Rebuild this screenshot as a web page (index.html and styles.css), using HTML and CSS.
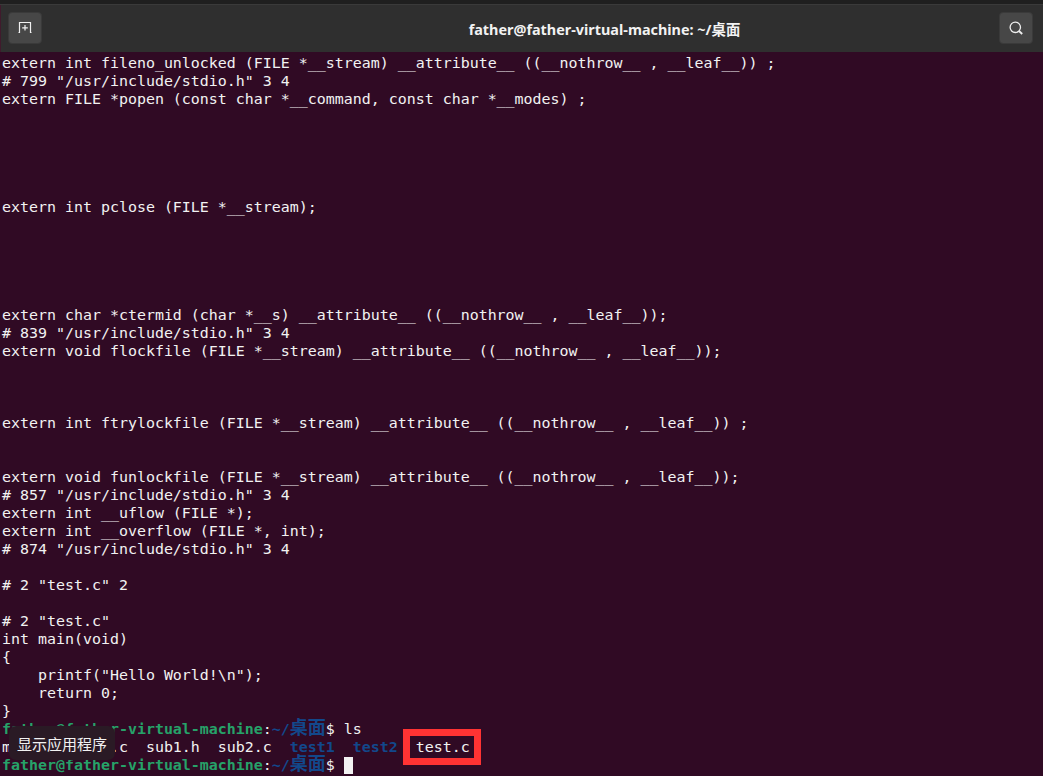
FILE: index.html
```html
<!DOCTYPE html>
<html lang="zh">
<head>
<meta charset="utf-8">
<title>father@father-virtual-machine: ~/桌面</title>
<link rel="stylesheet" href="styles.css">
</head>
<body>
<div class="window">
  <div class="strip"></div>
  <header class="titlebar">
    <button class="tool-btn" aria-label="新建标签页">
      <svg class="icon" viewBox="0 0 16 16" width="16" height="16"><path d="M1.5 12.5h1V2.5h11v10h1M8 5v5.5M5.2 7.8h5.6" fill="none" stroke="#f0f0f0" stroke-width="1.2"/></svg>
    </button>
    <div class="title">father@father-virtual-machine: ~/桌面</div>
    <button class="tool-btn" aria-label="搜索">
      <svg class="icon" viewBox="0 0 16 16" width="16" height="16"><circle cx="7.3" cy="7.3" r="5.2" fill="none" stroke="#eeeeee" stroke-width="1.3"/><path d="M11 11l3.2 3" fill="none" stroke="#eeeeee" stroke-width="1.8"/></svg>
    </button>
  </header>
  <pre class="terminal">extern int fileno_unlocked (FILE *__stream) __attribute__ ((__nothrow__ , __leaf__)) ;
# 799 "/usr/include/stdio.h" 3 4
extern FILE *popen (const char *__command, const char *__modes) ;





extern int pclose (FILE *__stream);





extern char *ctermid (char *__s) __attribute__ ((__nothrow__ , __leaf__));
# 839 "/usr/include/stdio.h" 3 4
extern void flockfile (FILE *__stream) __attribute__ ((__nothrow__ , __leaf__));



extern int ftrylockfile (FILE *__stream) __attribute__ ((__nothrow__ , __leaf__)) ;


extern void funlockfile (FILE *__stream) __attribute__ ((__nothrow__ , __leaf__));
# 857 "/usr/include/stdio.h" 3 4
extern int __uflow (FILE *);
extern int __overflow (FILE *, int);
# 874 "/usr/include/stdio.h" 3 4

# 2 "test.c" 2

# 2 "test.c"
int main(void)
{
    printf("Hello World!\n");
    return 0;
}
<span class="user">father@father-virtual-machine</span>:<span class="path">~/<span class="cjk">桌面</span></span>$ ls
main.c  sub1.c  sub1.h  sub2.c  <span class="dir">test1</span>  <span class="dir">test2</span>  <span class="marked">test.c</span>
<span class="user">father@father-virtual-machine</span>:<span class="path">~/<span class="cjk">桌面</span></span>$ <span class="cursor"></span></pre>
  <div class="tooltip">显示应用程序</div>
</div>
</body>
</html>
```
FILE: styles.css
```css
* { box-sizing: border-box; }
html, body { margin: 0; height: 100%; }
body { background: #300a24; overflow: hidden; }
.window { position: relative; display: flex; flex-direction: column; width: 1043px; height: 776px; overflow: hidden; }
.strip { height: 5px; flex: none; background: #1f1f1f; border-bottom: 1px solid #3a3a3a; }
.titlebar { flex: none; height: 47px; display: flex; align-items: center; padding: 0 10px 1px 7px; background: #2f2f2f; border-left: 1px solid #401a2c; }
.tool-btn { flex: none; width: 34px; height: 32px; padding: 0; display: flex; align-items: center; justify-content: center; background: #474747; border: 1px solid #3a3a3a; border-radius: 4px; }
.title { flex: 1; padding-left: 168px; text-align: center; font: bold 14.4px "Noto Sans", "Noto Sans CJK SC", sans-serif; color: #f2f2f2; }
.terminal { flex: 1; margin: 0; padding: 2px 0 0 2px; font-family: "DejaVu Sans Mono", "Noto Sans CJK SC", monospace; font-size: 14.95px; line-height: 18px; color: #f2f2f2; background: #300a24; white-space: pre; }
.user { color: #26a269; font-weight: bold; }
.path { color: #12488b; font-weight: bold; }
.cjk { font-size: 18px; line-height: 0; }
.dir { color: #12488b; font-weight: bold; }
.marked { position: relative; }
.marked::after { content: ""; position: absolute; left: -13px; right: -11px; top: -9px; bottom: -9px; border: 7px solid #ff3333; }
.cursor { display: inline-block; width: 9px; height: 17px; vertical-align: -4px; background: #f2f2f2; }
.tooltip { position: absolute; left: 9px; top: 726px; width: 106px; height: 34px; display: flex; align-items: center; justify-content: center; font: 15px "Noto Sans CJK SC", sans-serif; color: #f2f2f2; background: #2a1a25; border-radius: 7px; }
```
